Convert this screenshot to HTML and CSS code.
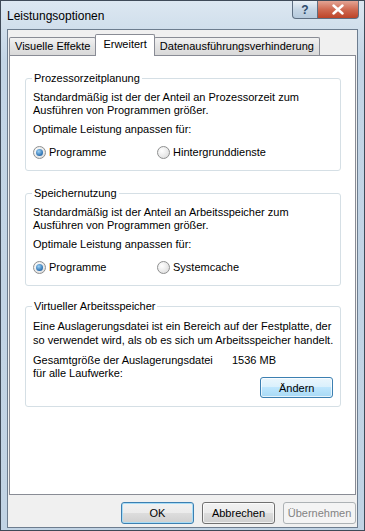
FILE: index.html
```html
<!DOCTYPE html>
<html lang="de">
<head>
  <meta charset="UTF-8">
  <title>Leistungsoptionen</title>
  <link rel="stylesheet" href="styles.css">
</head>
<body>
  <div class="window">
    <div class="titlebar">
      <span class="title">Leistungsoptionen</span>
      <div class="caption-buttons">
        <div class="cap-btn help">?</div>
        <div class="cap-btn close">
          <svg width="14" height="11" viewBox="0 0 14 11">
            <path d="M2.5 1.5 L11.5 9.5 M11.5 1.5 L2.5 9.5" stroke="#fff" stroke-width="2.4" stroke-linecap="round"/>
          </svg>
        </div>
      </div>
    </div>

    <div class="client">
      <!-- Tabs -->
      <div class="tabs">
        <div class="tab">Visuelle Effekte</div>
        <div class="tab active">Erweitert</div>
        <div class="tab">Datenausführungsverhinderung</div>
      </div>

      <div class="panel">
        <fieldset class="group">
          <legend>Prozessorzeitplanung</legend>
          <p>Standardmäßig ist der der Anteil an Prozessorzeit zum<br>Ausführen von Programmen größer.</p>
          <p class="sub">Optimale Leistung anpassen für:</p>
          <div class="radios">
            <label class="radio"><span class="dot checked"></span>Programme</label>
            <label class="radio"><span class="dot"></span>Hintergrunddienste</label>
          </div>
        </fieldset>

        <fieldset class="group">
          <legend>Speichernutzung</legend>
          <p>Standardmäßig ist der Anteil an Arbeitsspeicher zum<br>Ausführen von Programmen größer.</p>
          <p class="sub">Optimale Leistung anpassen für:</p>
          <div class="radios">
            <label class="radio"><span class="dot checked"></span>Programme</label>
            <label class="radio"><span class="dot"></span>Systemcache</label>
          </div>
        </fieldset>

        <fieldset class="group last">
          <legend>Virtueller Arbeitsspeicher</legend>
          <p>Eine Auslagerungsdatei ist ein Bereich auf der Festplatte, der<br>so verwendet wird, als ob es sich um Arbeitsspeicher handelt.</p>
          <div class="size-row">
            <span class="size-label">Gesamtgröße der Auslagerungsdatei<br>für alle Laufwerke:</span>
            <span class="size-value">1536 MB</span>
          </div>
          <div class="change-row">
            <button class="btn hot">Ändern</button>
          </div>
        </fieldset>
      </div>

      <div class="footer">
        <button class="btn default">OK</button>
        <button class="btn">Abbrechen</button>
        <button class="btn" disabled>Übernehmen</button>
      </div>
    </div>
  </div>
</body>
</html>
```

FILE: styles.css
```css
body {
  margin: 0;
  background: #c9d9e8;
  font-family: "Liberation Sans", Arial, sans-serif;
  font-size: 11px;
  color: #000;
}
.window {
  width: 365px;
  height: 531px;
  box-sizing: border-box;
  border: 1px solid #3f4a58;
  background: linear-gradient(#dce7f1, #c3d5e6 60px, #c1d3e4);
  padding: 0 6px 2px 6px;
  display: flex;
  flex-direction: column;
}
.titlebar {
  height: 28px;
  display: flex;
  justify-content: space-between;
  align-items: flex-start;
}
.title {
  font-size: 12px;
  margin-top: 8px;
}
.caption-buttons {
  display: flex;
  margin-right: -1px;
}
.cap-btn {
  height: 17px;
  border: 1px solid #5e6f82;
  border-top: none;
  display: flex;
  align-items: center;
  justify-content: center;
}
.help {
  width: 24px;
  border-radius: 0 0 0 4px;
  background: linear-gradient(#e9f0f6, #c6d6e5 50%, #b5c9dc);
  color: #2d4a6b;
  font-weight: bold;
  font-size: 12px;
}
.close {
  width: 40px;
  border-left: none;
  border-radius: 0 0 4px 0;
  background: linear-gradient(#e3a494, #cf6a52 50%, #bd4428);
}
.client {
  flex: 1;
  background: #f0f0f0;
  border: 1px solid #6d7d8f;
  padding: 4px 1px 0 1px;
  display: flex;
  flex-direction: column;
}
.tabs {
  display: flex;
  align-items: flex-end;
  height: 21px;
  position: relative;
  z-index: 1;
}
.tab {
  height: 17px;
  line-height: 17px;
  padding: 0 5px;
  border: 1px solid #898c95;
  border-bottom: none;
  background: linear-gradient(#f2f2f2, #e3e3e3 50%, #d9d9d9);
  margin-right: -1px;
  border-radius: 2px 2px 0 0;
}
.tab.active {
  height: 21px;
  line-height: 19px;
  background: #fff;
  padding: 0 7px;
  margin-bottom: -1px;
}
.panel {
  background: #fff;
  border: 1px solid #898c95;
  height: 440px;
  box-sizing: border-box;
  padding: 16px 14px 0 15px;
  display: flex;
  flex-direction: column;
  gap: 16px;
}
.group {
  margin: 0;
  border: 1px solid #d5dfe5;
  border-radius: 3px;
  padding: 7px 7px 11px 7px;
}
.group legend {
  padding: 0 2px;
  margin-left: -1px;
}
.group p {
  margin: 0;
  line-height: 13px;
  white-space: nowrap;
}
.group p.sub {
  margin-top: 6px;
}
.radios {
  display: flex;
  margin-top: 9px;
  height: 14px;
  align-items: center;
}
.radio {
  display: flex;
  align-items: center;
  gap: 3px;
  width: 124px;
}
.dot {
  width: 11px;
  height: 11px;
  border-radius: 50%;
  border: 1px solid #8e8f8f;
  background: radial-gradient(circle at 35% 35%, #fff, #d8d8d8);
  position: relative;
}
.dot.checked::after {
  content: "";
  position: absolute;
  left: 2px;
  top: 2px;
  width: 7px;
  height: 7px;
  border-radius: 50%;
  background: radial-gradient(circle at 40% 35%, #9ed2f5, #2a6fb0 70%, #1c4f86);
}
.group.last {
  margin-top: -2px;
  padding-bottom: 8px;
}
.group.last p {
  line-height: 14px;
}
.size-row {
  display: flex;
  margin-top: 7px;
  line-height: 13px;
}
.size-label {
  width: 199px;
}
.change-row {
  display: flex;
  justify-content: flex-end;
  margin-top: -3px;
}
.btn {
  font-family: "Liberation Sans", Arial, sans-serif;
  font-size: 11px;
  width: 73px;
  height: 22px;
  padding: 0;
  border: 1px solid #707070;
  border-radius: 3px;
  background: linear-gradient(#f2f2f2, #ebebeb 50%, #dddddd 50%, #cfcfcf);
  color: #000;
  box-shadow: inset 0 0 0 1px rgba(255, 255, 255, 0.7);
}
.btn.hot {
  height: 21px;
  border-color: #3c7fb1;
  background: linear-gradient(#eaf6fd, #d9f0fc 50%, #bee6fd 50%, #a7d9f5);
}
.btn.default {
  border-color: #3c7fb1;
  box-shadow: inset 0 0 0 1px #a8dcf6;
}
.btn:disabled {
  border-color: #adb2b5;
  background: #f4f4f4;
  color: #838383;
  box-shadow: none;
}
.footer {
  display: flex;
  justify-content: flex-end;
  gap: 8px;
  padding-top: 7px;
}
```
